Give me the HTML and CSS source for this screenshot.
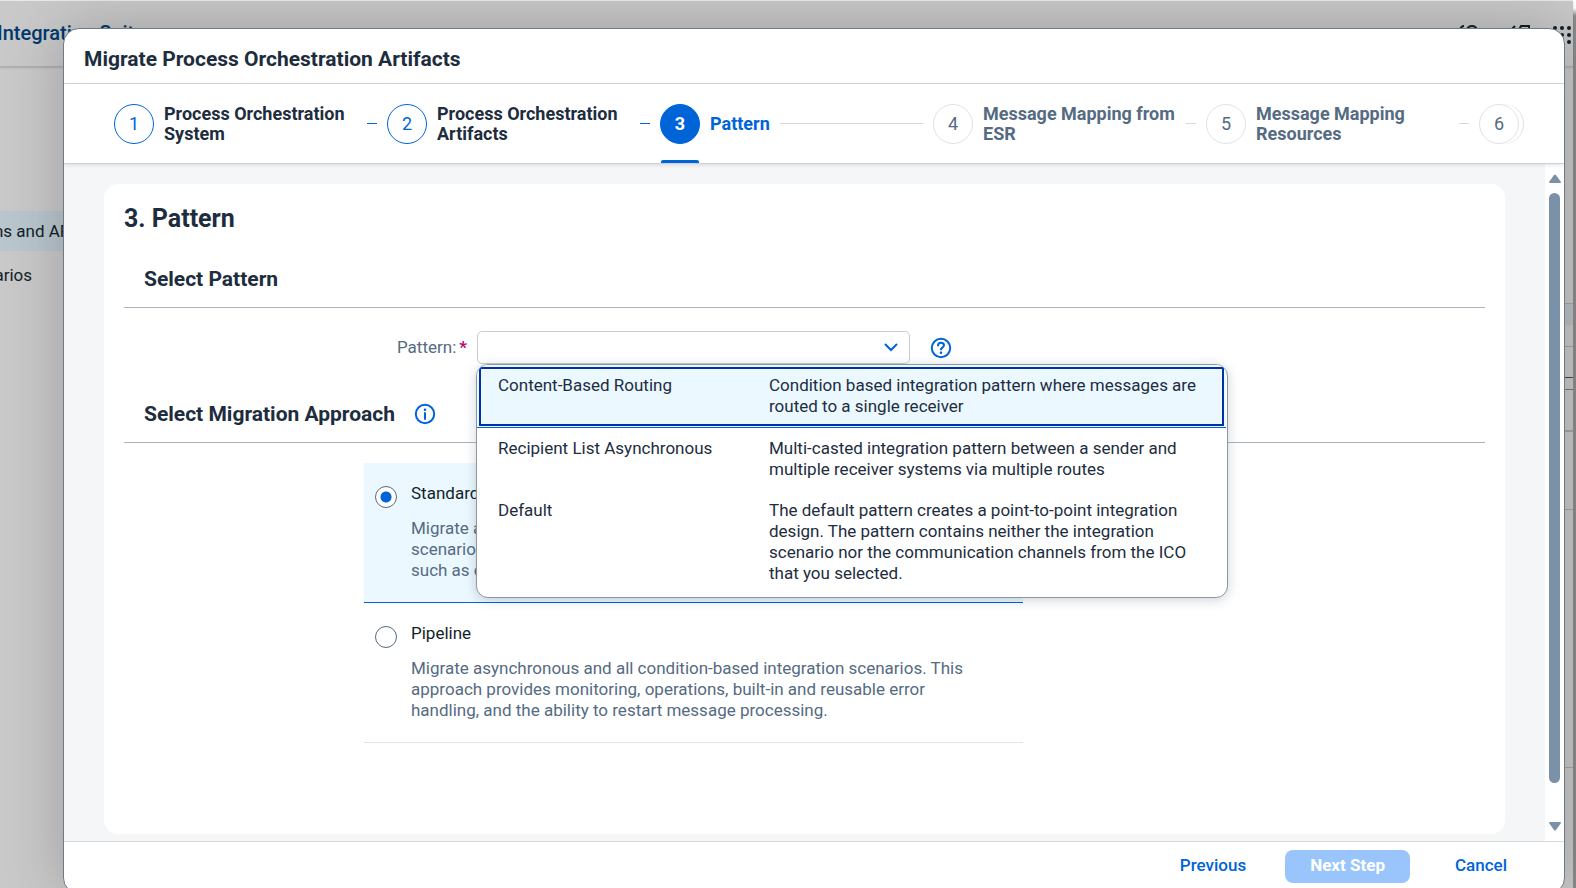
FILE: index.html
```html
<!DOCTYPE html>
<html lang="en">
<head>
<meta charset="utf-8">
<title>Migrate Process Orchestration Artifacts</title>
<link rel="stylesheet" href="styles.css">
</head>
<body>
<div class="app">
  <header class="shell">
    <span class="shell-title">Integration Suite</span>
    <div class="shell-icons">
      <svg width="20" height="20" viewBox="0 0 20 20" fill="none" stroke="currentColor" stroke-width="2"><path d="M1 5q1-4 4-4M8 5q1-4 5-4t5 4v6l-5 6"/></svg>
      <svg width="20" height="20" viewBox="0 0 20 20" fill="none" stroke="currentColor" stroke-width="2"><path d="M1 5l4-4M9 5l2-4h8v12h-8z"/></svg>
      <svg class="grid-icon" width="18" height="18" viewBox="0 0 18 18" fill="currentColor"><circle cx="2" cy="2" r="2"/><circle cx="9" cy="2" r="2"/><circle cx="16" cy="2" r="2"/><circle cx="2" cy="9" r="2"/><circle cx="9" cy="9" r="2"/><circle cx="16" cy="9" r="2"/><circle cx="2" cy="16" r="2"/><circle cx="9" cy="16" r="2"/><circle cx="16" cy="16" r="2"/></svg>
    </div>
  </header>
  <div class="workspace">
    <nav class="side">
      <a class="side-link side-link-active" href="#apis">Integrations and APIs</a>
      <a class="side-link side-link-short" href="#scenarios">Scenarios</a>
    </nav>
    <div class="rows"><i class="r1"></i><i class="r2"></i><i class="r3"></i><i class="r4"></i><i class="r5"></i><i class="r6"></i><i class="r7"></i></div>
  </div>
</div>

<section class="dialog" role="dialog" aria-labelledby="dlg-title">
  <header class="dialog-head"><h1 id="dlg-title">Migrate Process Orchestration Artifacts</h1></header>
  <ol class="steps">
    <li class="step done"><span class="num">1</span><span class="name">Process Orchestration System</span><span class="line"></span></li>
    <li class="step done"><span class="num">2</span><span class="name">Process Orchestration Artifacts</span><span class="line"></span></li>
    <li class="step current"><span class="num">3</span><span class="name">Pattern</span><span class="line"></span></li>
    <li class="step"><span class="num">4</span><span class="name">Message Mapping from ESR</span><span class="line"></span></li>
    <li class="step"><span class="num">5</span><span class="name">Message Mapping Resources</span><span class="line"></span></li>
    <li class="step last"><span class="num">6</span></li>
  </ol>
  <div class="body">
    <main class="card">
      <h2>3. Pattern</h2>
      <h3>Select Pattern</h3>
      <div class="field">
        <label for="pattern">Pattern:<b>*</b></label>
        <div class="combo">
          <input id="pattern" type="text" role="combobox" aria-expanded="true" aria-controls="pattern-list">
          <svg class="chevron" width="14" height="9" viewBox="0 0 14 9"><path d="M1.500 1.500L7 7l5.500-5.500"/></svg>
          <ul class="menu" id="pattern-list" role="listbox">
            <li class="option selected" role="option" aria-selected="true"><span>Content-Based Routing</span><span>Condition based integration pattern where messages are routed to a single receiver</span></li>
            <li class="option" role="option"><span>Recipient List Asynchronous</span><span>Multi-casted integration pattern between a sender and multiple receiver systems via multiple routes</span></li>
            <li class="option" role="option"><span>Default</span><span>The default pattern creates a point-to-point integration design. The pattern contains neither the integration scenario nor the communication channels from the ICO that you selected.</span></li>
          </ul>
        </div>
        <button class="icon-btn" type="button" aria-label="Help"><svg width="22" height="22" viewBox="0 0 22 22"><circle cx="11" cy="11" r="9.200"/><path d="M8 8.500C8 6.700 9.300 5.700 11 5.700s3 1 3 2.600c0 2.200-3 2.300-3 4.200"/><circle class="dot" cx="11" cy="15.800" r="1.300"/></svg></button>
      </div>
      <h3 class="approach-title">Select Migration Approach
        <button class="icon-btn" type="button" aria-label="Information"><svg width="22" height="22" viewBox="0 0 22 22"><circle cx="11" cy="11" r="9.200"/><path d="M11 10v6"/><circle class="dot" cx="11" cy="6.800" r="1.300"/></svg></button>
      </h3>
      <div class="approaches">
        <label class="approach chosen"><input type="radio" name="approach" checked><span class="label">Standard</span><span class="text">Migrate asynchronous, synchronous, and condition-based integration scenarios. This approach generates integration flows for the many patterns such as content-based routing.</span></label>
        <label class="approach"><input type="radio" name="approach"><span class="label">Pipeline</span><span class="text">Migrate asynchronous and all condition-based integration scenarios. This approach provides monitoring, operations, built-in and reusable error handling, and the ability to restart message processing.</span></label>
      </div>
    </main>
    <div class="scrollbar">
      <svg width="14" height="10" viewBox="0 0 14 10"><path d="M6 1q1-1 2 0l5 7q0 1-1 1H2q-1 0-1-1z"/></svg>
      <div class="thumb"></div>
      <svg class="down" width="14" height="10" viewBox="0 0 14 10"><path d="M6 9q1 1 2 0l5-7q0-1-1-1H2q-1 0-1 1z"/></svg>
    </div>
  </div>
  <footer class="foot">
    <button type="button">Previous</button>
    <button type="button" class="primary" disabled>Next Step</button>
    <button type="button">Cancel</button>
  </footer>
</section>
</body>
</html>
```
FILE: styles.css
```css
* { box-sizing: border-box; }
html, body { height: 100%; }
body {
  margin: 0;
  overflow: hidden;
  background: linear-gradient(#fff 8px, #8c8c8c 16px);
  color: #1d2d3e;
  font: 17px/21px Roboto, "Liberation Sans", sans-serif;
}
h1, h2, h3, ol, ul { margin: 0; padding: 0; list-style: none; }
button, input { font: inherit; margin: 0; }

.app {
  height: 100%;
  margin-right: 3px;
  border-top: 1px solid #e8ecea;
  background: #c8c9c8;
  display: flex;
  flex-direction: column;
}
.shell {
  height: 66px;
  display: flex;
  align-items: center;
  justify-content: space-between;
  border-bottom: 1px solid #acaeb0;
  box-shadow: 0 1px 2px rgba(0, 0, 0, .15);
}
.shell-title { margin-left: -3px; color: #00396e; font-size: 20px; font-weight: 500; }
.shell-icons { display: flex; align-items: center; gap: 31px; padding: 2px 2px 0 0; color: #131e29; }
.grid-icon { margin-left: -8px; }
.workspace { flex: 1; display: flex; justify-content: space-between; padding-top: 144px; }
.side { width: 84px; display: flex; flex-direction: column; gap: 4px; }
.side-link {
  height: 40px;
  display: flex;
  align-items: center;
  justify-content: flex-end;
  color: #131e29;
  text-decoration: none;
  white-space: nowrap;
}
.side-link-active { background: #b9c6cd; }
.side-link-short { padding-right: 52px; }
.rows { width: 12px; display: flex; flex-direction: column; }
.rows i { border-bottom: 1px solid #a2a6aa; }
.r1 { height: 93px; }
.r2 { height: 43px; background: linear-gradient(#b9c0c4 21px, transparent 21px); }
.rows .r3 { height: 31px; border-bottom-color: #3c4b5b; }
.rows .r4 { height: 12px; border-bottom-color: #6e7a86; }
.rows .r5 { height: 42px; border-bottom-width: 2px; }
.r6 { height: 78px; }
.r7 { height: 258px; }

.dialog {
  position: absolute;
  inset: 28px 11px -6px 63px;
  display: flex;
  flex-direction: column;
  overflow: hidden;
  border: 1px solid #6e7a86;
  border-radius: 16px;
  background: #fff;
  box-shadow: 0 0 60px rgba(0, 0, 0, .22);
}
.dialog-head { height: 55px; padding: 5px 20px 0; display: flex; align-items: center; border-bottom: 1px solid #d9d9d9; }
h1 { font-size: 21px; line-height: 24px; font-weight: 700; }

.steps {
  height: 80px;
  display: flex;
  align-items: center;
  padding: 0 40px 0 50px;
  border-bottom: 1px solid #d0d3d6;
  box-shadow: 0 1px 4px rgba(0, 0, 0, .12);
  z-index: 1;
}
.step { flex: 1; height: 100%; display: flex; align-items: center; gap: 10px; font-size: 18px; line-height: 20px; font-weight: 700; color: #556b82; position: relative; }
.num {
  flex: none;
  width: 40px;
  height: 40px;
  display: grid;
  place-items: center;
  border: 1px solid #e0e2e4;
  border-radius: 50%;
  background: #fff;
  font-weight: 400;
}
.name { max-width: 198px; }
.line { flex: 1; min-width: 10px; margin-right: 10px; height: 1px; background: #d9d9d9; }
.done .name { color: #1d2d3e; width: 193px; }
.done .num { border-color: #0064d9; color: #0064d9; }
.done .line { background: #0064d9; }
.current { color: #0064d9; }
.current .num { background: #0064d9; border-color: #0064d9; color: #fff; font-weight: 700; }
.current::after { content: ""; position: absolute; left: 1px; bottom: 0; width: 38px; height: 3px; border-radius: 2px 2px 0 0; background: #0064d9; }
.last { flex: none; width: 45px; }
.last .num { box-shadow: 4px 0 0 #fff, 5px 0 0 #e0e2e4; }

.body { flex: 1; min-height: 0; display: flex; background: #f5f6f7; }
.card { flex: 1; margin: 20px 40px 7px; padding: 20px; border-radius: 14px; background: #fff; }
h2 { font-size: 25px; line-height: 30px; font-weight: 700; }
h3 { height: 54px; margin-top: 20px; padding: 0 20px 4px; display: flex; align-items: center; font-size: 21px; line-height: 24px; border-bottom: 1px solid #a9b4be; }
.field { display: flex; align-items: center; margin: 23px 0 0; }
.field label { width: 343px; margin-right: 10px; text-align: right; color: #556b82; }
.field b { margin-left: 3px; color: #ba066c; }
.combo { position: relative; width: 433px; height: 33px; }
.combo input { width: 100%; height: 100%; border: 1px solid #c6ccd2; border-radius: 5px; background: #fff; padding: 0 40px 0 10px; outline: 0; }
.chevron { position: absolute; right: 12px; top: 12px; fill: none; stroke: #0064d9; stroke-width: 2; stroke-linecap: round; }
.icon-btn { display: grid; padding: 0; border: 0; background: none; }
.icon-btn svg { fill: none; stroke: #0064d9; stroke-width: 2; stroke-linecap: round; }
.icon-btn .dot { fill: #0064d9; stroke: none; }
.field .icon-btn { margin-left: 20px; }
.approach-title { gap: 19px; margin-top: 25px; }

.menu {
  position: absolute;
  z-index: 2;
  top: 33px;
  left: -1px;
  width: 752px;
  padding: 0 1px 3px 0;
  overflow: hidden;
  border: 1px solid #8c97a2;
  border-radius: 12px;
  background: #fff;
  box-shadow: 0 2px 12px rgba(34, 53, 72, .22);
}
.option { display: grid; grid-template-columns: 271px 437px; padding: 10px 0 10px 21px; }
.option.selected { border-bottom: 1px solid #0064d9; background: #ebf8ff; outline: 2px solid #0032a5; outline-offset: -4px; }

.approaches { width: 659px; margin: 20px 0 0 240px; }
.approach {
  display: grid;
  grid-template-columns: 22px 1fr;
  column-gap: 14px;
  row-gap: 14px;
  height: 140px;
  padding: 20px 39px 20px 11px;
  align-content: start;
  border-bottom: 1px solid #e5e5e5;
}
.approach.chosen { background: #ebf8ff; border-bottom-color: #0064d9; }
.approach input {
  appearance: none;
  width: 22px;
  height: 22px;
  margin-top: 3px;
  margin-bottom: -4px;
  border: 1px solid #556b82;
  border-radius: 50%;
  background: #fff;
}
.approach input:checked { background: radial-gradient(circle, #0064d9 5px, #fff 6px); }
.label { color: #131e29; }
.text { grid-column: 2; color: #556b82; }

.scrollbar { width: 19px; display: flex; flex-direction: column; align-items: center; padding: 10px 0; background: #fff; }
.scrollbar svg { flex: none; fill: #7b91a8; }
.thumb { width: 11px; flex: 0 1 590px; margin-top: 9px; border-radius: 6px; background: #7b91a8; }
.down { margin-top: auto; }

.foot { height: 52px; display: flex; align-items: flex-start; justify-content: flex-end; gap: 20px; padding: 8px 38px 0; border-top: 1px solid #d9d9d9; }
.foot button { height: 33px; padding: 0 19px 2px; border: 0; border-radius: 8px; background: none; color: #0064d9; font-weight: 500; }
.foot .primary { margin-right: 6px; padding: 0 25px 2px; background: #99c5fc; color: #fff; font-weight: 700; }
```
